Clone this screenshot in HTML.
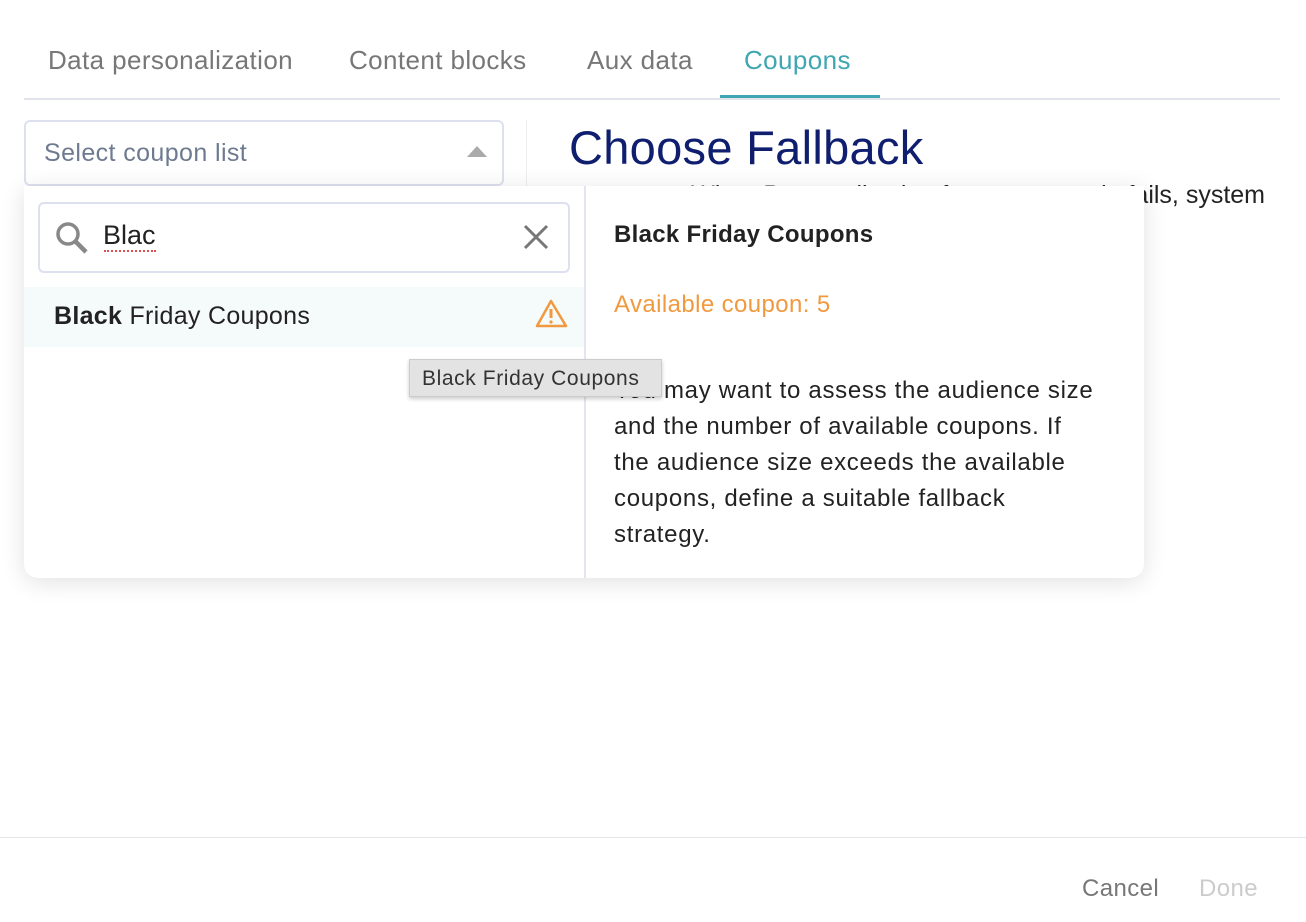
<!DOCTYPE html>
<html><head><style>
body{margin:0;width:1306px;height:922px;background:#fff;font-family:"Liberation Sans",sans-serif;position:relative;overflow:hidden;color:#222}
.a{position:absolute;white-space:nowrap}
</style></head><body>
<div class="a" style="left:48px;top:45px;font-size:26px;color:#777;letter-spacing:0.4px">Data personalization</div>
<div class="a" style="left:349px;top:45px;font-size:26px;color:#777;letter-spacing:0.4px">Content blocks</div>
<div class="a" style="left:587px;top:45px;font-size:26px;color:#777;letter-spacing:0.4px">Aux data</div>
<div class="a" style="left:744px;top:45px;font-size:26px;color:#3fa6b2;letter-spacing:0.4px">Coupons</div>
<div class="a" style="left:24px;top:98px;width:1256px;height:2px;background:#e1e4ea"></div>
<div class="a" style="left:720px;top:95px;width:160px;height:3px;background:#3fa6b2"></div>
<div class="a" style="left:526px;top:120px;width:1px;height:70px;background:#eceef2"></div>
<div class="a" style="left:24px;top:120px;border:2px solid #dde1ef;border-radius:6px;box-sizing:border-box;width:480px;height:66px"></div>
<div class="a" style="left:44px;top:139px;font-size:25px;color:#6e7a90;letter-spacing:0.4px">Select coupon list</div>
<div class="a" style="left:467px;top:146px;width:0;height:0;border-left:10px solid transparent;border-right:10px solid transparent;border-bottom:11px solid #aaa"></div>
<div class="a" style="left:569px;top:120px;font-size:47px;color:#0f1e6e;letter-spacing:0.3px">Choose Fallback</div>
<div class="a" style="right:41px;top:181px;font-size:25px;color:#222">When Personalization for coupon code fails, system</div>
<div class="a" style="left:24px;top:186px;width:1120px;height:392px;background:#fff;border-radius:0 0 14px 14px;box-shadow:0 4px 24px rgba(0,0,0,.12)"></div>
<div class="a" style="left:584px;top:186px;width:2px;height:392px;background:#e3e6f0"></div>
<div class="a" style="left:38px;top:202px;width:532px;height:71px;border:2px solid #dde1ef;border-radius:6px;box-sizing:border-box"></div>
<svg class="a" style="left:54px;top:220px" width="36" height="36" viewBox="0 0 36 36"><circle cx="14" cy="14" r="10" fill="none" stroke="#888" stroke-width="3.5"/><line x1="21" y1="21" x2="32" y2="32" stroke="#888" stroke-width="4.5"/></svg>
<div class="a" style="left:103px;top:220px;font-size:27px;color:#222">Blac</div>
<div class="a" style="left:104px;top:250px;width:52px;border-top:2px dotted #e05050"></div>
<svg class="a" style="left:521px;top:222px" width="30" height="30"><path d="M4 4L26 26M26 4L4 26" stroke="#777" stroke-width="3"/></svg>
<div class="a" style="left:24px;top:287px;width:560px;height:60px;background:#f5fafb"></div>
<div class="a" style="left:54px;top:302px;font-size:25px;color:#222;letter-spacing:0.3px"><span style="font-weight:600">Black</span> Friday Coupons</div>
<svg class="a" style="left:535px;top:298px" width="34" height="30" viewBox="0 0 34 30"><path d="M16 3L31 28H2Z" fill="none" stroke="#f0993f" stroke-width="2.5" stroke-linejoin="round"/><line x1="16" y1="11" x2="16" y2="20" stroke="#f0993f" stroke-width="3"/><circle cx="16" cy="24" r="1.6" fill="#f0993f"/></svg>
<div class="a" style="left:614px;top:221px;font-size:24px;font-weight:600;color:#222;letter-spacing:0.3px">Black Friday Coupons</div>
<div class="a" style="left:614px;top:291px;font-size:24px;color:#f0993f;letter-spacing:0.4px">Available coupon: 5</div>
<div class="a" style="left:614px;top:373px;font-size:24px;line-height:36px;color:#222;letter-spacing:0.7px">You may want to assess the audience size<br>and the number of available coupons. If<br>the audience size exceeds the available<br>coupons, define a suitable fallback<br>strategy.</div>
<div class="a" style="left:409px;top:359px;width:253px;height:38px;background:#e3e3e3;border:1px solid #ccc;box-shadow:0 2px 4px rgba(0,0,0,.2);font-size:21px;line-height:38px;padding-left:12px;box-sizing:border-box;color:#333;letter-spacing:0.6px">Black Friday Coupons</div>
<div class="a" style="left:0;top:837px;width:1306px;height:1px;background:#e5e7eb"></div>
<div class="a" style="left:1082px;top:875px;font-size:24px;color:#777;letter-spacing:0.4px">Cancel</div>
<div class="a" style="left:1199px;top:875px;font-size:24px;color:#ccc;letter-spacing:0.4px">Done</div>
</body></html>
